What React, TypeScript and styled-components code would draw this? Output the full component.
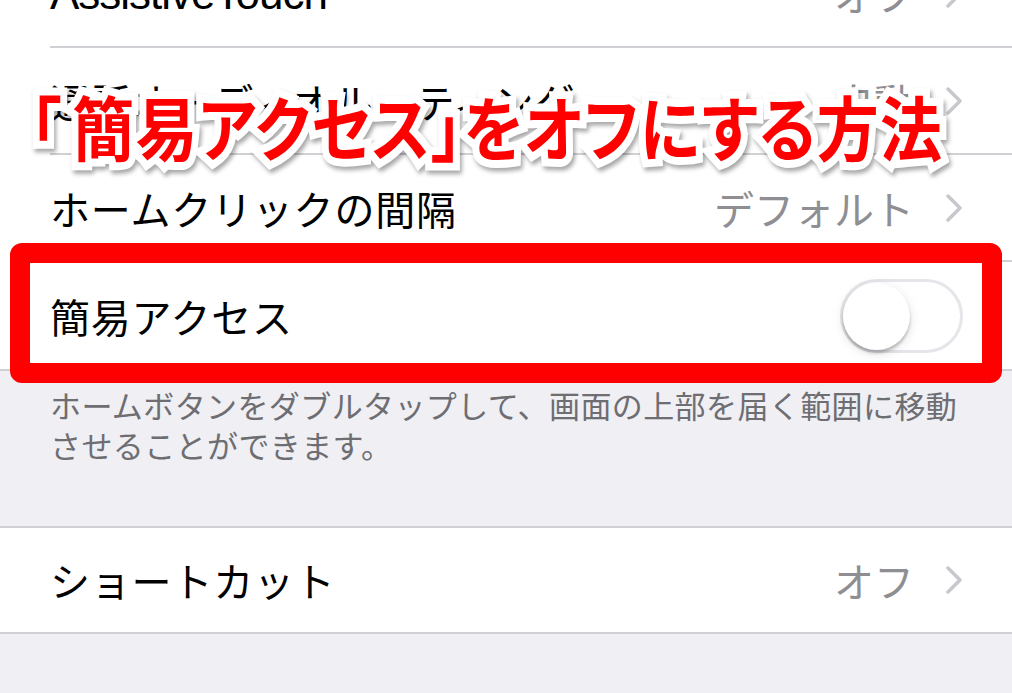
import styled, { createGlobalStyle } from "styled-components";

const GlobalStyle = createGlobalStyle`
  html, body {
    margin: 0;
    padding: 0;
    background: #efeff4;
    overflow: hidden;
  }
  body {
    font-family: "Noto Sans CJK JP", "Liberation Sans", sans-serif;
  }
`;

type RowProps = {
  label: string;
  value?: string;
  latin?: boolean;
  last?: boolean;
  toggle?: boolean;
  height?: number;
};

const Chevron = () => (
  <svg width="18" height="28" viewBox="0 0 18 28">
    <polyline points="3,2 15,14 3,26" fill="none" stroke="#c7c7cc" strokeWidth="3.5" strokeLinecap="round" strokeLinejoin="round" />
  </svg>
);

const SettingRow = ({ label, value, latin, last, toggle, height = 105 }: RowProps) => (
  <Row>
    <RowInner $last={last} $height={height}>
      <Label $latin={latin}>{label}</Label>
      {toggle ? (
        <Toggle>
          <Knob />
        </Toggle>
      ) : (
        <Value>
          <span>{value}</span>
          <Chevron />
        </Value>
      )}
    </RowInner>
  </Row>
);

const App = () => {
  return (
    <Screen>
      <GlobalStyle />
      <Group $first>
        <SettingRow label="AssistiveTouch" value="オフ" latin />
        <SettingRow label="通話オーディオルーティング" value="自動" />
        <SettingRow label="ホームクリックの間隔" value="デフォルト" />
        <SettingRow label="簡易アクセス" toggle last height={107} />
      </Group>
      <Footer>
        ホームボタンをダブルタップして、画面の上部を届く範囲に移動
        <br />
        させることができます。
      </Footer>
      <Group>
        <SettingRow label="ショートカット" value="オフ" last height={104} />
      </Group>

      <Highlight />
      <Title>
        <Bracket>「</Bracket>簡易アクセス」をオフにする方法
      </Title>
    </Screen>
  );
};
export default App;

const Screen = styled.div`
  position: relative;
  width: 1012px;
  height: 693px;
  overflow: hidden;
  background: #efeff4;
`;

const Group = styled.div<{ $first?: boolean }>`
  background: #ffffff;
  margin-top: ${(p) => (p.$first ? "-59px" : "0")};
  border-top: ${(p) => (p.$first ? "none" : "2px solid #d1d0d5")};
  border-bottom: 2px solid #d1d0d5;
`;

const Row = styled.div`
  display: flex;
  padding-left: 50px;
  background: #ffffff;
`;

const RowInner = styled.div<{ $last?: boolean; $height: number }>`
  flex: 1;
  display: flex;
  align-items: center;
  justify-content: space-between;
  height: ${(p) => p.$height}px;
  padding-right: 49px;
  border-bottom: ${(p) => (p.$last ? "none" : "2px solid #d1d0d5")};
`;

const Label = styled.div<{ $latin?: boolean }>`
  font-family: ${(p) =>
    p.$latin
      ? `"Liberation Sans", "Noto Sans CJK JP", sans-serif`
      : `"Noto Sans CJK JP", "Liberation Sans", sans-serif`};
  font-size: ${(p) => (p.$latin ? "44px" : "40px")};
  color: #000000;
  letter-spacing: ${(p) => (p.$latin ? "-1px" : "0.8px")};
`;

const Value = styled.div`
  display: flex;
  align-items: center;
  gap: 31px;
  font-size: 40px;
  color: #8e8e93;
  svg {
    display: block;
  }
`;

const Toggle = styled.div`
  position: relative;
  width: 123px;
  height: 74px;
  box-sizing: border-box;
  border: 3px solid #e5e5ea;
  border-radius: 37px;
  background: #ffffff;
`;

const Knob = styled.div`
  position: absolute;
  left: 0;
  top: 1px;
  width: 67px;
  height: 67px;
  border-radius: 50%;
  background: #ffffff;
  box-shadow: 0 3px 3px rgba(0, 0, 0, 0.22), 0 3px 12px rgba(0, 0, 0, 0.12);
`;

const Footer = styled.div`
  padding: 14px 50px 61px;
  font-size: 31px;
  line-height: 40px;
  letter-spacing: 0.4px;
  color: #6d6d72;
  white-space: nowrap;
`;

const Highlight = styled.div`
  position: absolute;
  left: 10px;
  top: 243px;
  width: 992px;
  height: 140px;
  box-sizing: border-box;
  border: 20px solid #ff0000;
  border-radius: 12px;
`;

const Title = styled.div`
  position: absolute;
  left: 30px;
  top: 90px;
  font-family: "Noto Sans CJK JP", sans-serif;
  font-weight: 700;
  font-size: 62px;
  line-height: 1;
  font-feature-settings: "palt";
  letter-spacing: 1.2px;
  color: #ff0000;
  white-space: nowrap;
  -webkit-text-stroke: 14px #ffffff;
  paint-order: stroke fill;
  transform: scaleY(1.14);
  transform-origin: top left;
  filter: drop-shadow(2px 3px 2px rgba(0, 0, 0, 0.35));
`;

const Bracket = styled.span`
  margin-right: 10px;
`;
